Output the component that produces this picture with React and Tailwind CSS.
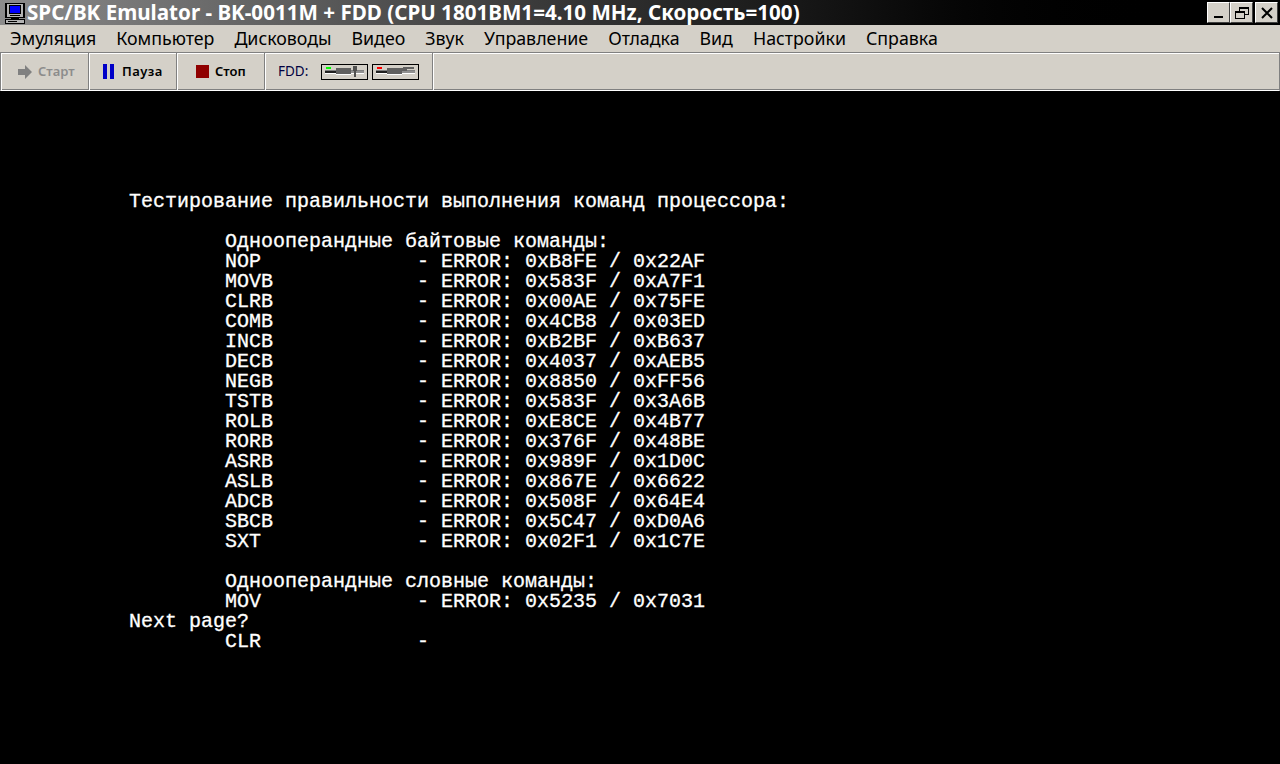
const menus = ['Эмуляция', 'Компьютер', 'Дисководы', 'Видео', 'Звук', 'Управление', 'Отладка', 'Вид', 'Настройки', 'Справка']

const rows1 = [
  ['NOP', '0xB8FE', '0x22AF'],
  ['MOVB', '0x583F', '0xA7F1'],
  ['CLRB', '0x00AE', '0x75FE'],
  ['COMB', '0x4CB8', '0x03ED'],
  ['INCB', '0xB2BF', '0xB637'],
  ['DECB', '0x4037', '0xAEB5'],
  ['NEGB', '0x8850', '0xFF56'],
  ['TSTB', '0x583F', '0x3A6B'],
  ['ROLB', '0xE8CE', '0x4B77'],
  ['RORB', '0x376F', '0x48BE'],
  ['ASRB', '0x989F', '0x1D0C'],
  ['ASLB', '0x867E', '0x6622'],
  ['ADCB', '0x508F', '0x64E4'],
  ['SBCB', '0x5C47', '0xD0A6'],
  ['SXT', '0x02F1', '0x1C7E'],
]

const row = ([name, a, b]) => `        ${name.padEnd(16)}- ERROR: ${a} / ${b}`

const lines = [
  'Тестирование правильности выполнения команд процессора:',
  '',
  '        Однооперандные байтовые команды:',
  ...rows1.map(row),
  '',
  '        Однооперандные словные команды:',
  row(['MOV', '0x5235', '0x7031']),
  'Next page?',
  '        CLR             -',
]

function AppIcon() {
  return (
    <svg width="24" height="24" viewBox="0 0 24 24" className="shrink-0" shapeRendering="crispEdges">
      <rect x="3" y="2" width="20" height="15" fill="#000" />
      <rect x="5" y="3" width="16" height="13" fill="#b4b4b4" />
      <rect x="7" y="4" width="12" height="9" fill="#000" />
      <rect x="8" y="5" width="10" height="7" fill="#0000ff" />
      <rect x="8" y="14" width="10" height="1" fill="#000" />
      <rect x="9" y="17" width="8" height="1" fill="#000" />
      <rect x="3" y="18" width="20" height="5" fill="#000" />
      <rect x="4" y="19" width="18" height="3" fill="#b4b4b4" />
      <rect x="6" y="20" width="9" height="1" fill="#000" />
    </svg>
  )
}

function WinButton({ children }) {
  return (
    <div className="w-[23px] h-[21px] bg-[#d4d0c8] border border-t-white border-l-white border-r-[#404040] border-b-[#404040] flex items-center justify-center">
      <svg width="16" height="14" viewBox="0 0 16 14" shapeRendering="crispEdges">{children}</svg>
    </div>
  )
}

function Drive({ led, lever }) {
  return (
    <svg width="47" height="16" viewBox="0 0 47 16" shapeRendering="crispEdges">
      <rect x="0.5" y="0.5" width="46" height="15" fill="#d4d0c8" stroke="#000" />
      <rect x="5" y="3" width="5" height="2" fill={led} />
      <rect x="4" y="6" width="39" height="1" fill="#808080" />
      <rect x="4" y="7" width="39" height="2" fill="#202020" />
      <rect x="30" y="7" width="13" height="2" fill="#909090" />
      <rect x="4" y="9" width="39" height="1" fill="#fff" />
      <rect x="15" y="4" width="15" height="6" fill="#606060" />
      <rect x="15" y="10" width="15" height="1" fill="#fff" />
      {lever}
    </svg>
  )
}

function ToolCell({ className, children }) {
  return (
    <div className={`h-[37px] flex items-center border-r border-r-[#808080] shadow-[1px_0_0_#fff] ${className}`}>
      {children}
    </div>
  )
}

export default function App() {
  return (
    <div className="w-[1280px] h-[764px] overflow-hidden bg-black flex flex-col">
      <div className="h-[25px] flex items-center pl-[2px] pr-[2px] bg-gradient-to-r from-[#8c8c8c] to-black to-[92%]">
        <AppIcon />
        <span className="ml-[1px] text-[20.6px] leading-none font-bold text-white whitespace-nowrap font-['Noto_Sans',sans-serif]">
          SPC/BK Emulator - BK-0011M + FDD (CPU 1801BM1=4.10 MHz, Скорость=100)
        </span>
        <div className="ml-auto flex items-center">
          <WinButton>
            <rect x="3" y="10" width="9" height="2" fill="#000" />
          </WinButton>
          <WinButton>
            <path d="M5.5 1.5h9v7h-9zM5 2h10" fill="none" stroke="#000" />
            <rect x="1.5" y="5.5" width="9" height="7" fill="#d4d0c8" stroke="#000" />
            <rect x="1" y="5" width="10" height="2" fill="#000" />
          </WinButton>
          <div className="w-[2px]" />
          <WinButton>
            <path d="M3 2l10 10M13 2L3 12" stroke="#000" strokeWidth="2" shapeRendering="auto" />
          </WinButton>
        </div>
      </div>

      <div className="h-[27px] bg-[#d4d0c8] flex items-center pl-[10px] gap-[20px] text-[17.8px] text-black font-['Noto_Sans',sans-serif]">
        {menus.map((m) => (
          <span key={m} className="whitespace-nowrap leading-none">{m}</span>
        ))}
      </div>

      <div className="h-[39px] bg-[#d4d0c8] border border-[#808080] border-b-white shadow-[inset_1px_1px_0_#fff,inset_0_-1px_0_#808080] pl-[1px] flex items-center text-[13px] font-['Noto_Sans',sans-serif]">
        <ToolCell className="w-[87px] pl-[16px] gap-[5px] text-[#8c8c8c] font-semibold">
          <svg width="15" height="14" viewBox="0 0 15 14">
            <path d="M0 4h7V0l7 7-7 7v-4H0z" fill="#808080" />
          </svg>
          <span>Старт</span>
        </ToolCell>
        <ToolCell className="w-[88px] pl-[14px] gap-[7px] text-black font-semibold">
          <svg width="12" height="15" viewBox="0 0 12 15" shapeRendering="crispEdges">
            <rect x="0" y="0" width="4" height="15" fill="#0000c8" />
            <rect x="7" y="0" width="4" height="15" fill="#0000c8" />
          </svg>
          <span className="tracking-[0.5px]">Пауза</span>
        </ToolCell>
        <ToolCell className="w-[88px] pl-[19px] gap-[6px] text-black font-semibold">
          <div className="w-[13px] h-[13px] bg-[#900000]" />
          <span>Стоп</span>
        </ToolCell>
        <ToolCell className="w-[168px] pl-[13px] text-[#000040] text-[13.5px]">
          <span className="w-[43px]">FDD:</span>
          <Drive
            led="#00ff00"
            lever={<path d="M32 2h4v5h-1v6h-2V7h-1z" fill="#505050" />}
          />
          <div className="w-[4px]" />
          <Drive
            led="#ff0000"
            lever={<path d="M28 5l4-2h10v2h-7v2h-7z" fill="#606060" />}
          />
        </ToolCell>
      </div>

      <pre className="pt-[101px] pl-[129px] text-[20px] leading-[20px] text-white font-['Liberation_Mono',monospace] [-webkit-text-stroke:0.3px_white]">
        {lines.map((l, i) => (
          <div key={i} className="h-[20px]">{l}</div>
        ))}
      </pre>
    </div>
  )
}
